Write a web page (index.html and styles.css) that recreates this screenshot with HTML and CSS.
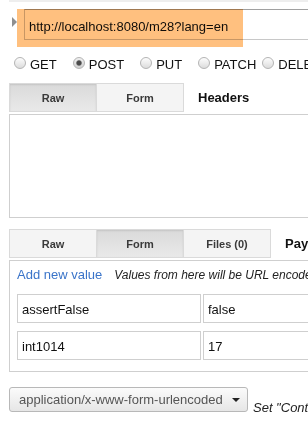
FILE: index.html
```html
<!DOCTYPE html>
<html>
<head>
<meta charset="utf-8">
<link rel="stylesheet" href="styles.css">
</head>
<body>
<div class="app">
  <div class="topbar"></div>
  <div class="url-row">
    <span class="toggle"></span>
    <div class="url-input">http://localhost:8080/m28?lang=en</div>
    <div class="highlight"></div>
  </div>
  <div class="methods">
    <label class="method"><input type="radio" name="method"><span class="method-name">GET</span></label>
    <label class="method"><input type="radio" name="method" checked><span class="method-name">POST</span></label>
    <label class="method"><input type="radio" name="method"><span class="method-name">PUT</span></label>
    <label class="method tight"><input type="radio" name="method"><span class="method-name">PATCH</span></label>
    <label class="method"><input type="radio" name="method"><span class="method-name">DELETE</span></label>
  </div>
  <div class="tab-row">
    <div class="tabs">
      <div class="tab active">Raw</div>
      <div class="tab">Form</div>
    </div>
    <div class="section-title">Headers</div>
  </div>
  <div class="textarea"></div>
  <div class="tab-row second">
    <div class="tabs">
      <div class="tab">Raw</div>
      <div class="tab active">Form</div>
      <div class="tab">Files (0)</div>
    </div>
    <div class="section-title">Payload</div>
  </div>
  <div class="panel">
    <div class="panel-head">
      <span class="add-link">Add new value</span>
      <span class="hint">Values from here will be URL encoded</span>
    </div>
    <div class="kv-row">
      <div class="field key">assertFalse</div>
      <div class="field value">false</div>
    </div>
    <div class="kv-row">
      <div class="field key">int1014</div>
      <div class="field value">17</div>
    </div>
  </div>
  <div class="ct-row">
    <div class="select"><span>application/x-www-form-urlencoded</span><span class="caret"></span></div>
    <span class="ct-hint">Set "Content-Type" header to overwrite this value.</span>
  </div>
</div>
</body>
</html>
```
FILE: styles.css
```css
html, body {
  margin: 0;
  padding: 0;
  background: #fff;
  overflow: hidden;
}
body {
  font-family: "Liberation Sans", Arial, sans-serif;
  font-size: 13px;
  color: #222;
}
.app {
  width: 440px;
  padding-left: 9px;
}
.topbar {
  height: 2px;
  background: #eeeeee;
}
.url-row {
  position: relative;
  display: flex;
  align-items: flex-start;
  margin-top: 7px;
}
.toggle {
  flex-shrink: 0;
  width: 0;
  height: 0;
  border-left: 5px solid #8f8f8f;
  border-top: 5px solid transparent;
  border-bottom: 5px solid transparent;
  margin: 8px 7px 0 3px;
}
.url-input {
  flex: 1;
  height: 31px;
  box-sizing: border-box;
  border: 1px solid #c8c8c8;
  border-top-color: #a0a0a0;
  padding: 4px 0 0 4px;
  line-height: 25px;
  color: #111;
  background: #fff;
  white-space: nowrap;
}
.highlight {
  position: absolute;
  left: 8px;
  top: 0;
  width: 226px;
  height: 38px;
  background: #ffc07f;
  mix-blend-mode: multiply;
}
.methods {
  display: flex;
  align-items: center;
  height: 16px;
  margin-top: 15px;
  padding-left: 5px;
  white-space: nowrap;
}
.method {
  display: flex;
  align-items: center;
  gap: 4px;
  margin-right: 16px;
  color: #111;
  flex-shrink: 0;
}
.method.tight {
  margin-right: 6px;
}
.method-name {
  padding-top: 2px;
}
.method input {
  -webkit-appearance: none;
  appearance: none;
  margin: 0;
  width: 12px;
  height: 12px;
  box-sizing: border-box;
  border-radius: 50%;
  border: 1px solid #b4b4b4;
  background: linear-gradient(#fdfdfd, #dcdcdc);
}
.method input:checked {
  background: radial-gradient(circle, #4a4a4a 0 2px, #8a8a8a 2.6px, transparent 3.2px), linear-gradient(#f0f0f0, #d0d0d0);
}
.tab-row {
  display: flex;
  align-items: center;
  margin-top: 12px;
}
.tab-row.second {
  margin-top: 11px;
}
.tabs {
  display: flex;
  flex-shrink: 0;
}
.tab {
  width: 87px;
  height: 29px;
  box-sizing: border-box;
  border: 1px solid #dadada;
  border-left: none;
  background: #f4f4f4;
  font-size: 11px;
  font-weight: bold;
  color: #3a3a3a;
  display: flex;
  align-items: center;
  justify-content: center;
}
.tab:first-child {
  width: 88px;
  border-left: 1px solid #dadada;
}
.tab.active {
  background: linear-gradient(#dadada, #e9e9e9);
  box-shadow: inset 0 1px 2px rgba(0, 0, 0, 0.1);
}
.section-title {
  margin-left: 14px;
  font-size: 13px;
  font-weight: bold;
  color: #111;
  white-space: nowrap;
}
.textarea {
  margin-top: 2px;
  height: 104px;
  box-sizing: border-box;
  border: 1px solid #cfcfcf;
}
.panel {
  margin-top: 2px;
  border: 1px solid #cfcfcf;
  padding: 6px 0 11px 7px;
}
.panel-head {
  display: flex;
  align-items: baseline;
  gap: 12px;
  line-height: 16px;
  margin-bottom: 11px;
  white-space: nowrap;
}
.add-link {
  color: #3a74c9;
  font-size: 13px;
  flex-shrink: 0;
}
.hint {
  font-size: 12px;
  font-style: italic;
  color: #222;
}
.kv-row {
  display: flex;
  gap: 2px;
}
.kv-row + .kv-row {
  margin-top: 8px;
}
.field {
  height: 29px;
  box-sizing: border-box;
  border: 1px solid #cfcfcf;
  padding: 1px 0 0 4px;
  line-height: 27px;
  color: #111;
}
.field.key {
  width: 184px;
  flex-shrink: 0;
}
.field.value {
  flex: 1;
}
.ct-row {
  display: flex;
  align-items: flex-end;
  margin-top: 15px;
  white-space: nowrap;
}
.select {
  flex-shrink: 0;
  width: 239px;
  height: 25px;
  box-sizing: border-box;
  border: 1px solid #b8b8b8;
  border-radius: 3px;
  background: linear-gradient(#fbfbfb, #e6e6e6);
  display: flex;
  align-items: center;
  justify-content: space-between;
  padding: 0 7px 0 9px;
  color: #555;
}
.caret {
  flex-shrink: 0;
  width: 0;
  height: 0;
  border-top: 4px solid #222;
  border-left: 4px solid transparent;
  border-right: 4px solid transparent;
}
.ct-hint {
  font-style: italic;
  margin-left: 5px;
  line-height: 13px;
  margin-bottom: -2px;
  color: #222;
}
```
